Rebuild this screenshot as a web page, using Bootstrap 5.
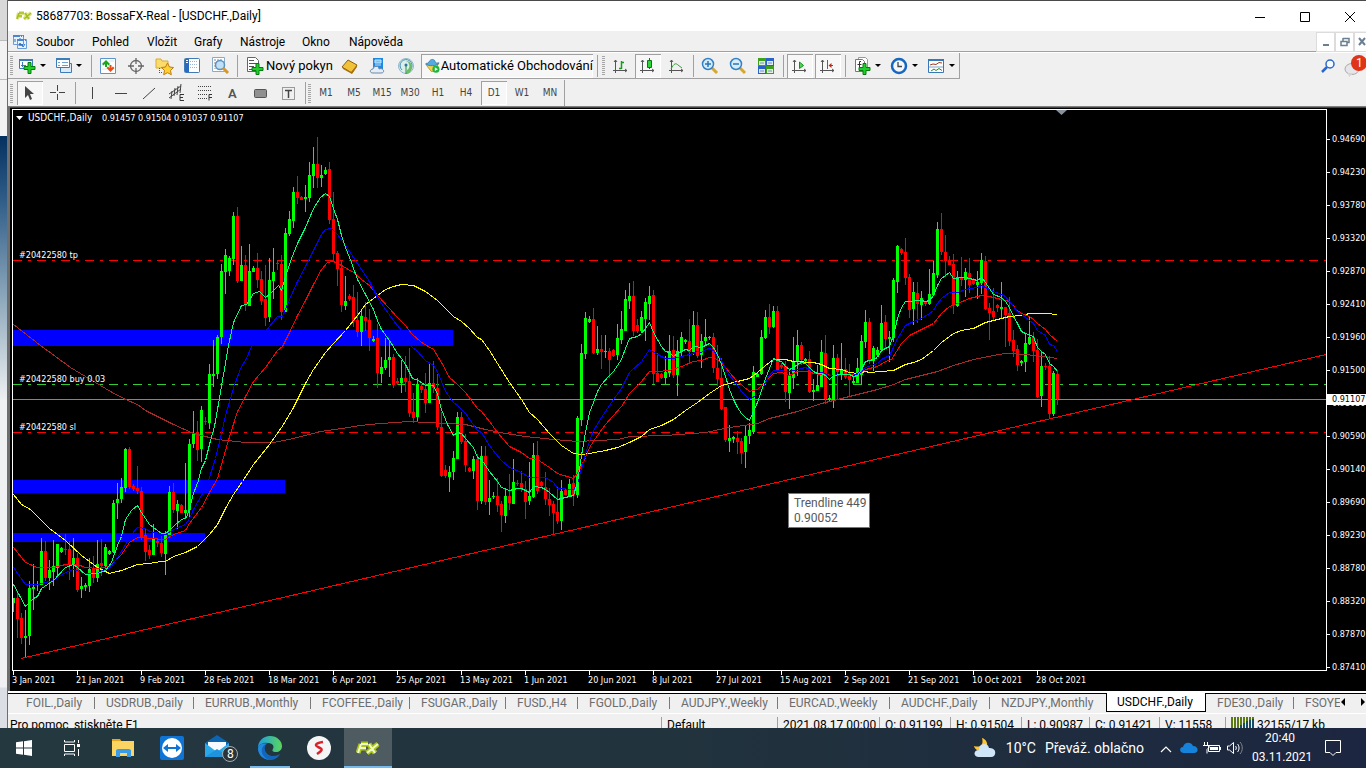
<!DOCTYPE html>
<html lang="cs">
<head>
<meta charset="utf-8">
<meta name="viewport" content="width=device-width, initial-scale=1">
<title>58687703: BossaFX-Real - [USDCHF.,Daily]</title>
<link rel="stylesheet" href="https://cdn.jsdelivr.net/npm/bootstrap@5.3.0/dist/css/bootstrap.min.css">
<style>
  :root { --face: #f0f0f0; --edge: #a0a0a0; }
  body { height: 100vh; font-family: Roboto, sans-serif; font-size: 12px; line-height: 16px; color: #000; background: var(--face); }
  main { min-width: 0; }
  button { border: 0; background: none; padding: 0; color: inherit; }
  .desk { width: 8px; background: linear-gradient(#d9d9d9 0 40px, #bbb 40px 41px, #f2f2f2 41px 79px, #bbb 79px 80px, #f2f2f2 80px 136px, #04305f 136px, #2f5d88 200px, #8fa9bc 300px, #eef0f2 400px, #f0f0f2 687px, #dcdee6 688px); border-right: 1px solid #6d6d6d; }
  .title-row { height: 31px; background: #fff; border-top: 1px solid #4a4a4a; padding-left: 8px; }
  .title-row button { width: 45px; height: 30px; }
  .title-row button:last-child { width: 39px; padding-left: 7px; }
  .menu-row { height: 22px; border-bottom: 1px solid #fff; box-shadow: inset 0 -1px var(--edge); padding-left: 4px; }
  .menu-row a { color: #000; text-decoration: none; }
  .menu-grid { display: grid; grid-template-columns: 56px 55px 47px 46px 62px 47px 74px; }
  .mdi { gap: 2px; }
  .mdi button { width: 17px; height: 18px; background: #fff; outline: 1px solid #dcdcdc; }
  .mdi button:last-child { width: 11px; overflow: hidden; }
  .tools { height: 26px; border-bottom: 1px solid var(--edge); border-right: 1px solid var(--edge); }
  .tools2 { border-bottom: 0; height: 26px; margin-top: 1px; }
  .grip { width: 8px; height: 19px; background: repeating-linear-gradient(#a6a6a6 0 1px, #f0f0f0 1px 2px) 2px 0 / 3px 100% no-repeat; }
  .grip.slim { width: 6px; }
  .tool { width: 28px; height: 24px; display: flex; align-items: center; justify-content: center; flex: none; }
  .drop { width: 36px; height: 24px; display: flex; align-items: center; gap: 3px; padding-left: 1px; flex: none; }
  .drop::after { content: ""; border: 3px solid transparent; border-top-color: #000; border-bottom: 0; }
  .drop.wide { width: 37px; padding-left: 4px; }
  .pressed { background: #f7f7f7; box-shadow: inset 1px 1px #a0a0a0, inset -1px -1px #fff; }
  .tool.pressed { width: 26px; margin: 0 1px; }
  .divide { width: 6px; height: 22px; background: linear-gradient(#a0a0a0, #a0a0a0) 3px 0 / 1px 100% no-repeat; flex: none; }
  .divide.slim { width: 4px; }
  .order { width: 96px; padding-left: 5px; gap: 1px; flex: none; white-space: nowrap; }
  .auto { width: 172px; height: 24px; padding-left: 4px; margin: 0 1px; flex: none; white-space: nowrap; }
  .order span, .auto span { font-size: 13px; }
  .frames { font-family: "DejaVu Sans Condensed", sans-serif; font-size: 10px; color: #444; }
  .chart-frame { border-top: 1px solid #808080; border-left: 2px solid #6e6e6e; background: #000; padding: 2px 0 0 2px; color: #fff; box-shadow: inset 0 1px #444; font-family: "DejaVu Sans Condensed", sans-serif; font-size: 9px; }
  .plot { border: 1px solid #fff; }
  .plot svg text { font-size: 9px; fill: #fff; }
  .plot svg text.symbol { font-size: 10px; }
  .prices { width: 39px; padding-top: 14px; }
  .prices div { height: 33px; line-height: 33px; padding-left: 5px; background: linear-gradient(#fff, #fff) 0 16px / 3px 1px no-repeat; }
  .prices .bid { top: 285px; left: 0; right: 0; height: 11px; line-height: 11px; background: #fff; color: #000; }
  .dates { height: 20px; }
  .dates span { width: 64px; flex: none; line-height: 18px; background: linear-gradient(#fff, #fff) 1px 0 / 1px 4px no-repeat; }
  .tabs { height: 23px; border-top: 2px solid #fff; border-bottom: 1px solid #fff; box-shadow: inset 0 1px #000; color: #6d6d6d; padding-left: 7px; display: grid; grid-template-columns: 80px 99px 117px 99px 96px 72px 92px 108px 112px 100px 116px 100px 88px 1fr 26px; }
  .tabs button { text-align: left; padding-left: 11px; height: 20px; line-height: 18px; white-space: nowrap; overflow: hidden; background: linear-gradient(#7a7a7a, #7a7a7a) 100% 4px / 1px 12px no-repeat; }
  .tabs .current { background: #fff; color: #000; border: 1px solid #000; border-top: 0; height: 19px; padding-left: 10px; }
  .tabs .bare { background: none; }
  .status { height: 14px; overflow: hidden; padding-left: 2px; display: grid; grid-template-columns: 1fr 116px 102px 71px 71px 68px 70px 66px 140px; }
  .status span { height: 22px; border-right: 1px solid #a0a0a0; padding-left: 5px; margin-top: 3px; white-space: nowrap; line-height: 17px; }
  .status span:first-child { padding-left: 0; }
  .status span:last-child { border: 0; }
  .taskbar { height: 40px; background: linear-gradient(90deg, #243840, #21333d 50%, #1c2640); color: #fff; }
  .taskbar .app { width: 48px; height: 40px; display: flex; align-items: center; justify-content: center; margin-right: 1px; }
  .taskbar .app.start { margin-right: 0; }
  .taskbar .app.tasks { margin-right: 3px; }
  .app.running { background: linear-gradient(#76b9ed, #76b9ed) 50% 100% / 40px 2px no-repeat; }
  .app.active { background: linear-gradient(#76b9ed, #76b9ed) 0 100% / 100% 2px no-repeat #4e5c61; }
  .weather { font-size: 14px; gap: 9px; }
  .clock { width: 56px; }
  .tip { left: 775px; top: 383px; width: 82px; height: 35px; background: #fff; border: 1px solid #767676; color: #575757; font-family: Roboto, sans-serif; font-size: 12px; line-height: 15px; padding: 2px 5px; white-space: nowrap; }
</style>
</head>
<body class="d-flex flex-column overflow-hidden">
<div class="d-flex flex-fill overflow-hidden">
<div class="desk flex-shrink-0"></div>
<main class="d-flex flex-column flex-fill overflow-hidden">
  <header class="title-row d-flex align-items-center flex-shrink-0">
    <svg width="16" height="10" viewBox="0 0 16 10"><path d="M3 2h5M2 5h4M3 2 1 8M9 2l4 6M15 2 8 8" fill="none" stroke="#dbe58a" stroke-width="4"/><path d="M3 2h5M2 5h4M3 2 1 8M9 2l4 6M15 2 8 8" fill="none" stroke="#a9bd1c" stroke-width="1.5"/></svg>
    <span class="ms-1 flex-fill">58687703: BossaFX-Real - [USDCHF.,Daily]</span>
    <button aria-label="Minimalizovat"><svg width="10" height="10"><path d="M0 5.5h10" stroke="#000"/></svg></button>
    <button aria-label="Maximalizovat"><svg width="10" height="10"><path d="M.5.5h9v9h-9z" stroke="#000" fill="none"/></svg></button>
    <button aria-label="Zavřít"><svg width="10" height="10"><path d="m0 0 10 10M10 0 0 10" stroke="#000"/></svg></button>
  </header>

  <nav class="menu-row d-flex align-items-center flex-shrink-0">
    <svg width="16" height="16" viewBox="0 0 16 16"><path d="M1.500 1.500h10v9h-10zM5.500 5.500h9v9h-9z" fill="#e8f2fc" stroke="#6a9cd8"/><path d="M1 2h11M5 6h10" stroke="#4a86cf" stroke-width="2" stroke-dasharray="7 1 1 1"/><path d="M3 8V5M8 5v-1M7 12l1-3 1 3 1-2 1 3 2-3" fill="none" stroke="#2d6fc0"/></svg>
    <div class="menu-grid flex-fill">
      <a href="#" class="ps-2">Soubor</a><a href="#" class="ps-2">Pohled</a><a href="#" class="ps-2">Vložit</a><a href="#" class="ps-2">Grafy</a><a href="#" class="ps-2">Nástroje</a><a href="#" class="ps-2">Okno</a><a href="#" class="ps-2">Nápověda</a>
    </div>
    <div class="mdi d-flex">
      <button aria-label="Minimalizovat graf"><svg width="10" height="10"><path d="M2 8h6" stroke="#6b7f92" stroke-width="2"/></svg></button>
      <button aria-label="Obnovit graf"><svg width="10" height="10"><path d="M3 1.500h6v4H7M1 4.500h6v4H1zM3 1v3" stroke="#6b7f92" fill="none" stroke-width="1.500"/></svg></button>
      <button aria-label="Zavřít graf"><svg width="10" height="10"><path d="m3 1 6 7M9 1 3 8" stroke="#6b7f92" stroke-width="2"/></svg></button>
    </div>
  </nav>

  <div class="d-flex flex-shrink-0">
  <div class="tools d-flex align-items-center">
    <div class="grip"></div>
    <button class="drop" aria-label="Nový graf"><svg width="20" height="20" viewBox="0 0 20 20"><path d="M2.500 3.500h13v9h-13z" fill="#fff" stroke="#3d7cb8"/><path d="M2 4h14" stroke="#3d7cb8" stroke-width="2"/><path d="M5.500 6v5M4 9.500h5M12 6v2" stroke="#3d7cb8"/><path d="M11 6.500h3v4h4v3h-4v4h-3v-4H7v-3h4z" fill="#1fd02a" stroke="#087810"/></svg></button>
    <button class="drop" aria-label="Profily"><svg width="20" height="20" viewBox="0 0 20 20"><path d="M7.500 7.500h11v9h-11z" fill="#dcebf8" stroke="#3d7cb8"/><path d="M3.500 2.500h13v9h-13z" fill="#fff" stroke="#3d7cb8"/><path d="M5 6.500h2M9 6.500h6M5 9.500h2M9 9.500h6" stroke="#6ea2d0"/><path d="M3 3h14" stroke="#3d7cb8" stroke-width="2"/></svg></button>
    <div class="divide"></div>
    <button class="tool" aria-label="Tržní přehled"><svg width="18" height="18" viewBox="0 0 18 18"><path d="M1.500 1.500h15v15h-15z" fill="#fdfefe" stroke="#5b95cc"/><path d="M3 6h3M10 4h5M3 12h5" stroke="#dce4ee"/><path d="m7 3 4 4-1.500 1.500L8 7v3H6V7L4.500 8.500 3 7z" fill="#18a81c"/><path d="m11.500 15-4-4L9 9.500l1.500 1.500V8h2v3L14 9.500l1.500 1.500z" fill="#ea4b16"/></svg></button>
    <button class="tool" aria-label="Okno údajů"><svg width="18" height="18" viewBox="0 0 18 18"><circle cx="9" cy="9" r="5.500" fill="none" stroke="#666" stroke-width="1.300"/><path d="M9 1v6M9 11v6M1 9h6M11 9h6" stroke="#666" stroke-width="1.300"/></svg></button>
    <button class="tool" aria-label="Navigátor"><svg width="20" height="20" viewBox="0 0 20 20"><path d="M2 3h5l1 2h6v7H2z" fill="#fbdc6a" stroke="#d9ab33"/><path d="M5.500 12v6M5 16.500h4" stroke="#555" stroke-dasharray="1 1" fill="none"/><path d="m13.500 7 2 4 4 .5-3 3 .8 4.200-3.800-2-3.800 2 .8-4.200-3-3 4-.5z" fill="#ffcf33" stroke="#ba7d13"/></svg></button>
    <button class="tool" aria-label="Terminál"><svg width="18" height="18" viewBox="0 0 18 18"><rect x="1.500" y="1.500" width="15" height="14" rx="1" fill="#fff" stroke="#4179b4"/><path d="M4 2v13" stroke="#2c69c0" stroke-width="4"/><path d="M3 3.500h2M3 5.500h2" stroke="#fff"/><path d="M7 4.500h8M7 7.500h8M7 10.500h8" stroke="#9bb5d5" stroke-dasharray="1 1"/></svg></button>
    <button class="tool" aria-label="Tester strategií"><svg width="20" height="20" viewBox="0 0 20 20"><path d="M2.500 1.500h12v14h-12z" fill="#fff" stroke="#8ba9c8"/><path d="M5 3v10M8 3v10M11 3v10" stroke="#888" stroke-dasharray="2 1"/><circle cx="10" cy="9" r="4.500" fill="#bfe0f6" stroke="#5c92bd" stroke-width="1.500"/><path d="m13 12 5 5" stroke="#d4992a" stroke-width="3"/></svg></button>
    <div class="divide"></div>
    <button class="order d-flex align-items-center"><svg width="20" height="20" viewBox="0 0 20 20"><path d="M2.500 1.500h8l3 3v11h-11z" fill="#fff" stroke="#666"/><path d="M4 4.500h5M4 7.500h8M4 10.500h5M4 13.500h4" stroke="#555"/><path d="M11 7.500h3v4h4v3h-4v4h-3v-4H7v-3h4z" fill="#1fd02a" stroke="#087810"/></svg><span>Nový pokyn</span></button>
    <button class="tool" aria-label="MetaEditor"><svg width="18" height="18" viewBox="0 0 18 18"><path d="M1 10 7 3l9 5-5 8z" fill="#f2c13a" stroke="#8a5e0c"/><path d="m1 10 9 5 1 2-9-5zM10 15l6-7v2l-5 7z" fill="#a8710f"/></svg></button>
    <button class="tool" aria-label="VPS"><svg width="18" height="18" viewBox="0 0 18 18"><path d="M4 1h10v11H4z" fill="#1e87e0"/><path d="M6 3h6v3H6zM6 8h6" stroke="#c4e7ff" fill="#6cc5ff"/><path d="M4 16c-4 0-3-4 0-4 0-3 6-4 6 0 4-2 7 4 2 4z" fill="#e3edf7" stroke="#6b87a8"/></svg></button>
    <button class="tool" aria-label="Signály"><svg width="18" height="18" viewBox="0 0 18 18"><circle cx="9" cy="9" r="7.500" fill="#dcefe6" stroke="#8fb7ce"/><path d="M5 13a6 6 0 1 1 9-1" stroke="#4a90b8" fill="none"/><path d="M9 4a5 5 0 0 1 1 9l-1 4c8-1 8-13 0-13z" fill="#69bd66"/><circle cx="9" cy="8" r="1.500" fill="#2873a8"/><path d="M9 9v8" stroke="#258c38"/></svg></button>
    <button class="auto pressed d-flex align-items-center"><svg width="20" height="20" viewBox="0 0 20 20"><path d="M1 8h16l-7 9H8z" fill="#f4cf4e" stroke="#b88d1d"/><path d="M1 7c2-1 3 0 4-2 2-5 8-4 8 0 1 2 3 1 5 1-1 4-15 5-17 1z" fill="#55abdf" stroke="#2a78ae"/><circle cx="14" cy="14" r="4.500" fill="#1db53a"/><path d="m12.500 11.500 4 2.500-4 2.500z" fill="#fff"/></svg><span>Automatické Obchodování</span></button>
    <div class="divide"></div>
    <div class="grip slim"></div>
    <button class="tool" aria-label="Sloupcový graf"><svg width="18" height="18" viewBox="0 0 18 18"><path d="M4.500 3v13M2 13.500h14M3 5l1.500-2L6 5M14 12l2 1.500-2 1.500" fill="none" stroke="#555"/><path d="M10.500 4v8M8 11.500h2M11 5.500h2" stroke="#159c1a" stroke-width="1.500"/></svg></button>
    <button class="tool pressed" aria-label="Svíčkový graf"><svg width="18" height="18" viewBox="0 0 18 18"><path d="M3.500 3v13M1 13.500h14M2 5l1.500-2L5 5M13 12l2 1.500-2 1.500" fill="none" stroke="#555"/><path d="M10.500 1v11" stroke="#087810"/><path d="M8.500 3.500h4v7h-4z" fill="#2ed43a" stroke="#087810"/></svg></button>
    <button class="tool" aria-label="Čárový graf"><svg width="18" height="18" viewBox="0 0 18 18"><path d="M4.500 3v13M2 13.500h14M3 5l1.500-2L6 5M14 12l2 1.500-2 1.500" fill="none" stroke="#555"/><path d="M4 12c3-6 5-6 7-4l4 3" fill="none" stroke="#35a03a"/></svg></button>
    <div class="divide"></div>
    <button class="tool" aria-label="Přiblížit"><svg width="18" height="18" viewBox="0 0 18 18"><path d="m11 11 5 5" stroke="#d9a62c" stroke-width="3"/><circle cx="7" cy="7" r="5.500" fill="#d5ecfb" stroke="#3480c4" stroke-width="1.500"/><path d="M4 7h6M7 4v6" stroke="#2d74b8" stroke-width="1.500"/></svg></button>
    <button class="tool" aria-label="Oddálit"><svg width="18" height="18" viewBox="0 0 18 18"><path d="m11 11 5 5" stroke="#d9a62c" stroke-width="3"/><circle cx="7" cy="7" r="5.500" fill="#d5ecfb" stroke="#3480c4" stroke-width="1.500"/><path d="M4 7h6" stroke="#2d74b8" stroke-width="1.500"/></svg></button>
    <button class="tool" aria-label="Uspořádat okna"><svg width="18" height="18" viewBox="0 0 18 18"><path d="M1 1h8v8H1zM9 9h8v8H9z" fill="#3fa01c"/><path d="M9 1h8v8H9zM1 9h8v8H1z" fill="#2a62cc"/><path d="M2 4h6v4H2zM10 4h6v4h-6zM2 12h6v4H2zM10 12h6v4h-6z" fill="#fff" opacity=".85"/><path d="M3 6h4M11 6h4M3 14h4M11 14h4" stroke="#6d95b8"/></svg></button>
    <div class="divide"></div>
    <button class="tool pressed" aria-label="Automatický posun"><svg width="18" height="18" viewBox="0 0 18 18"><path d="M3.500 3v13M1 13.500h14M2 5l1.500-2L5 5M13 12l2 1.500-2 1.500" fill="none" stroke="#555"/><path d="m8.500 5 4 3.500-4 3z" fill="#4fd857" stroke="#129018"/></svg></button>
    <button class="tool pressed" aria-label="Odsazení grafu"><svg width="18" height="18" viewBox="0 0 18 18"><path d="M3.500 3v13M1 13.500h14M2 5l1.500-2L5 5M13 12l2 1.500-2 1.500" fill="none" stroke="#555"/><path d="M8.500 3v9" stroke="#2d6eb0"/><path d="M14 8.500h-4" stroke="#b03020"/><path d="M12.500 6v5L9.500 8.500z" fill="#b03020"/></svg></button>
    <div class="divide"></div>
    <button class="drop wide" aria-label="Indikátory"><svg width="20" height="20" viewBox="0 0 20 20"><path d="M6.500 1.500h7l2 2v10h-9z" fill="#fff" stroke="#999"/><path d="M3.500 3.500h7l2 2v10h-9z" fill="#fff" stroke="#777"/><path d="M9 5.500H7.500V13M5.500 8.500h4" stroke="#333" fill="none"/><path d="M11 7.500h3v4h4v3h-4v4h-3v-4H7v-3h4z" fill="#1fd02a" stroke="#087810"/></svg></button>
    <button class="drop wide" aria-label="Periody"><svg width="20" height="20" viewBox="0 0 20 20"><circle cx="10" cy="10" r="7" fill="#f4f8fb" stroke="#1766c0" stroke-width="2.500"/><path d="M9 6v4.500h4" stroke="#444" fill="none" stroke-width="1.300"/></svg></button>
    <button class="drop wide" aria-label="Šablony"><svg width="20" height="20" viewBox="0 0 20 20"><path d="M2.500 3.500h15v13h-15z" fill="#fff" stroke="#3878b8"/><path d="M2 4h16" stroke="#3878b8" stroke-width="2"/><path d="M3 11h14" stroke="#7aa5d2"/><path d="m4 9 3-1 3 .5 3-2 3 .5" stroke="#a33b22" fill="none"/><path d="m5 15 3-2 2 1.500 3-2 3 2" stroke="#22902c" fill="none"/></svg></button>
  </div>
  <div class="flex-fill d-flex justify-content-end align-items-center">
    <button class="me-2" aria-label="Hledat"><svg width="16" height="16" viewBox="0 0 16 16"><circle cx="10" cy="6" r="4" fill="#f5faff" stroke="#2c66cc" stroke-width="1.500"/><path d="m7 9-5 5" stroke="#2c66cc" stroke-width="2.500"/></svg></button>
    <button aria-label="Zprávy, 1 nová"><svg width="22" height="26" viewBox="0 0 22 26"><ellipse cx="8" cy="16" rx="7" ry="5.500" fill="#e5e5ea" stroke="#aaa"/><path d="m4 20 1 4 5-4" fill="#d5d5d8"/><circle cx="15" cy="10" r="8" fill="#df3417"/><text x="12" y="14" font-size="12" fill="#fff">1</text></svg></button>
  </div>
  </div>

  <div class="d-flex flex-shrink-0">
  <div class="tools tools2 d-flex align-items-center">
    <div class="grip"></div>
    <button class="tool pressed" aria-label="Kurzor"><svg width="18" height="18" viewBox="0 0 18 18"><path d="M4 2v12l3-3 2 5 2-1-2-5h4z" fill="#444"/></svg></button>
    <button class="tool" aria-label="Zaměřovač"><svg width="18" height="18" viewBox="0 0 18 18"><path d="M8.500 1v6M8.500 10v6M1 8.500h6M10 8.500h6" stroke="#444"/></svg></button>
    <div class="divide"></div>
    <button class="tool" aria-label="Svislá čára"><svg width="18" height="18"><path d="M9.500 3v12" stroke="#444"/></svg></button>
    <button class="tool" aria-label="Vodorovná čára"><svg width="18" height="18"><path d="M4 9.500h12" stroke="#444"/></svg></button>
    <button class="tool" aria-label="Trendová čára"><svg width="18" height="18"><path d="M4 15 16 4" stroke="#444"/></svg></button>
    <button class="tool" aria-label="Kanál"><svg width="18" height="18" viewBox="0 0 18 18"><path d="m2 14 12-9M5 7l-1 8M8 4l-1 8M11 2l-1 9M14 0l-1 9M2 10 14 2" stroke="#444" fill="none"/><path d="M17 10.500h-4v6h4M13 13.500h3" fill="none" stroke="#333"/></svg></button>
    <button class="tool" aria-label="Fibonacci"><svg width="18" height="18" viewBox="0 0 18 18"><path d="M3 2.500h14M3 6.500h14M3 10.500h9M3 14.500h9" stroke="#444" stroke-dasharray="1 1"/><path d="M17 10.500h-3v6M14 13.500h3" fill="none" stroke="#333"/></svg></button>
    <button class="tool" aria-label="Text"><svg width="18" height="18" viewBox="0 0 18 18"><text x="5" y="14" font-size="13" font-weight="600" fill="#555">A</text></svg></button>
    <button class="tool" aria-label="Obdélník"><svg width="18" height="18"><rect x="3.500" y="5.500" width="12" height="8" rx="1" fill="#909090" stroke="#555"/></svg></button>
    <button class="tool" aria-label="Textový štítek"><svg width="18" height="18" viewBox="0 0 18 18"><path d="M3.500 3.500h12v12h-12z" fill="none" stroke="#444" stroke-dasharray="1 1"/><path d="M6 6.500h7M9.500 6v8" stroke="#444" stroke-width="1.500"/></svg></button>
    <div class="divide slim"></div>
    <div class="grip slim"></div>
    <div class="frames d-flex align-items-center">
      <button class="tool">M1</button><button class="tool">M5</button><button class="tool">M15</button><button class="tool">M30</button><button class="tool">H1</button><button class="tool">H4</button><button class="tool pressed">D1</button><button class="tool">W1</button><button class="tool">MN</button>
    </div>
  </div>
  </div>

  <section class="chart-frame flex-fill d-flex flex-column overflow-hidden">
    <div class="d-flex flex-fill overflow-hidden">
      <div class="plot flex-fill position-relative overflow-hidden">
        <svg width="100%" height="100%" class="d-block" aria-label="Graf USDCHF">
          <g transform="translate(-13 -110)">
            <path d="M13 330h440v16H13zM13 480h272v13H13zM13 533h192v9H13z" fill="#00f"/>
            <g shape-rendering="crispEdges" fill="none">
              <path d="M13 260.500h1400M13 432.500h1400" stroke="#f00" stroke-dasharray="9 6 3 6"/>
              <path d="M13 384.500h1400" stroke="#32cd32" stroke-dasharray="9 6 3 6"/>
              <path d="M13 399.500h1400" stroke="#778899"/>
              <path id="up" fill="#0f0"/><path id="down" fill="#f00"/>
              <g id="averages" transform="translate(.5 .5)"></g>
              <path d="M21 658.500 1326 354.500" stroke="#f00"/>
            </g>
            <path d="M16 116h7l-3.500 4z" fill="#fff"/><path d="M1056 110h11l-5.500 5z" fill="#8593a1"/>
            <text class="symbol" x="28" y="121">USDCHF.,Daily</text><text x="102" y="121">0.91457 0.91504 0.91037 0.91107</text>
            <text x="19" y="258">#20422580 tp</text><text x="19" y="382">#20422580 buy 0.03</text><text x="19" y="430">#20422580 sl</text>
          </g>
        </svg>
        <div class="tip position-absolute">Trendline 449<br>0.90052</div>
      </div>
      <div class="prices position-relative flex-shrink-0">
        <div>0.94690</div><div>0.94230</div><div>0.93780</div><div>0.93320</div><div>0.92870</div><div>0.92410</div><div>0.91960</div><div>0.91500</div><div>0.91050</div><div>0.90590</div><div>0.90140</div><div>0.89690</div><div>0.89230</div><div>0.88780</div><div>0.88320</div><div>0.87870</div><div>0.87410</div>
        <div class="bid position-absolute">0.91107</div>
      </div>
    </div>
    <div class="dates d-flex flex-shrink-0"><span>3 Jan 2021</span><span>21 Jan 2021</span><span>9 Feb 2021</span><span>28 Feb 2021</span><span>18 Mar 2021</span><span>6 Apr 2021</span><span>25 Apr 2021</span><span>13 May 2021</span><span>1 Jun 2021</span><span>20 Jun 2021</span><span>8 Jul 2021</span><span>27 Jul 2021</span><span>15 Aug 2021</span><span>2 Sep 2021</span><span>21 Sep 2021</span><span>10 Oct 2021</span><span>28 Oct 2021</span></div>
  </section>

  <div class="tabs flex-shrink-0">
    <button>FOIL.,Daily</button><button>USDRUB.,Daily</button><button>EURRUB.,Monthly</button><button>FCOFFEE.,Daily</button><button>FSUGAR.,Daily</button><button>FUSD.,H4</button><button>FGOLD.,Daily</button><button>AUDJPY.,Weekly</button><button>EURCAD.,Weekly</button><button>AUDCHF.,Daily</button><button class="bare">NZDJPY.,Monthly</button><button class="current">USDCHF.,Daily</button><button>FDE30.,Daily</button><button class="bare">FSOYE</button>
    <svg width="26" height="18" aria-hidden="true"><path d="M5 5v8L1 9zM21 5v8l4-4z" fill="#000"/></svg>
  </div>
  <footer class="status flex-shrink-0">
    <span>Pro pomoc, stiskněte F1</span><span>Default</span><span>2021.08.17 00:00</span><span>O: 0.91199</span><span>H: 0.91504</span><span>L: 0.90987</span><span>C: 0.91421</span><span>V: 11558</span>
    <span><svg width="23" height="12" class="align-top"><path d="M1 0v12M4 0v12M7 0v12M10 0v8M13 0v6M16 0v4M19 0v3M22 0v2" stroke="#5c7a12" stroke-width="2"/><path d="M10 8v4M13 6v6M16 4v8M19 3v9M22 2v10" stroke="#174a66" stroke-width="2"/></svg> 32155/17 kb</span>
  </footer>
</main>
</div>

<div class="taskbar d-flex align-items-center flex-shrink-0">
  <button class="app start" aria-label="Start"><svg width="16" height="16" viewBox="0 0 16 16"><path d="M0 2.300 7 1.300v6.200H0zM8 1.200 16 0v7.500H8zM0 8.500h7v6.200l-7-1zM8 8.500h8V16l-8-1.200z" fill="#fff"/></svg></button>
  <button class="app tasks" aria-label="Zobrazení úloh"><svg width="16" height="16" viewBox="0 0 16 16"><path d="M.500 4.500h10v7H.500zM.500 0v2h10V0M.500 16v-2h10v2M14.500 0v3M14.500 9v7" fill="none" stroke="#fff"/><path d="M13 4h3v3h-3z" fill="#fff"/></svg></button>
  <button class="app" aria-label="Průzkumník"><svg width="24" height="20" viewBox="0 0 24 20"><path d="M1 1h8l2 3H1z" fill="#e8a317"/><path d="M1 3h22v15H1z" fill="#fcd462"/><path d="M5 19v-7l2-1h11l2 1v7h-4v-4H9v4z" fill="#3b9be5"/></svg></button>
  <button class="app" aria-label="TeamViewer"><svg width="24" height="24" viewBox="0 0 24 24"><rect width="24" height="24" rx="2" fill="#0e74d6"/><circle cx="12" cy="12" r="10" fill="#fff"/><path d="m3 12 5-4v3h8V8l5 4-5 4v-3H8v3z" fill="#0e74d6"/></svg></button>
  <button class="app" aria-label="Pošta, 8"><svg width="34" height="28" viewBox="0 0 34 28"><path d="m1 9 12-8 12 8v12H1z" fill="#0b65b3"/><path d="M4 8h18v10H4z" fill="#f7fbff"/><path d="m1 9 12 9 12-9v14H1z" fill="#29a8ea"/><path d="m1 23 12-8 12 8z" fill="#1e94dc"/><circle cx="26" cy="20" r="7.500" fill="#2b343a" stroke="#a5adb0"/><text x="23" y="24" font-size="12" fill="#fff">8</text></svg></button>
  <button class="app running" aria-label="Edge"><svg width="24" height="24" viewBox="0 0 24 24"><defs><linearGradient id="eg"><stop stop-color="#1b9de2"/><stop offset="1" stop-color="#5bd65a"/></linearGradient></defs><path d="M0 12C0 5 5 0 12 0s12 5 12 10c0 4-3 6-6 6-4 0-4-2-3-3 2-4-2-6-5-6-5 0-9 2-10 5z" fill="url(#eg)"/><path d="M0 12c1-5 7-6 10-5-6 3-3 13 5 13 3 0 5-1 7-2-2 4-6 6-10 6C5 24 0 19 0 12z" fill="#1267bd"/><path d="M8 8c-7 3-5 14 4 16-8-1-12-6-12-12 1-4 5-5 8-4z" fill="#2389dc"/></svg></button>
  <button class="app" aria-label="Seznam"><svg width="24" height="24" viewBox="0 0 24 24"><circle cx="12" cy="12" r="12" fill="#f4f5f6"/><path d="M16 6c-7 1-9 3-5 5 5 2 5 3-1 7" fill="none" stroke="#d8232a" stroke-width="2.500"/></svg></button>
  <button class="app active" aria-label="MetaTrader"><svg width="24" height="14" viewBox="0 0 24 14"><path d="M5 3h7M4 7h6M5 3 2 12M13 3l6 9M22 3 11 12" fill="none" stroke="#a8c814" stroke-width="5"/><path d="M5 3h7M4 7h6M5 3 2 12M13 3l6 9M22 3 11 12" fill="none" stroke="#f3f8cc" stroke-width="2"/></svg></button>
  <div class="flex-fill"></div>
  <div class="weather d-flex align-items-center">
    <svg width="24" height="22" viewBox="0 0 24 22"><path d="M9 1c2 7-2 10-8 8 1 5 8 7 12 2 3-4 0-9-4-10z" fill="#ffc72e"/><path d="M6 20c-6 0-6-7 0-7 0-7 9-8 10-2 8-1 8 9 2 9z" fill="#cfe5f8"/></svg>
    <span>10°C</span><span>Převáž. oblačno</span>
  </div>
  <div class="d-flex align-items-center ms-3">
    <button aria-label="Skryté ikony"><svg width="12" height="8"><path d="m1 7 5-5 5 5" fill="none" stroke="#fff" stroke-width="1.200"/></svg></button>
    <svg class="ms-2" width="18" height="12" viewBox="0 0 18 12"><path d="M4 11c-5 0-5-6-1-6 1-5 8-6 10-1 6 0 6 7 1 7z" fill="#1582dc"/></svg>
    <svg class="ms-1" width="20" height="14" viewBox="0 0 20 14"><path d="M6.500 4.500h11v6h-11z" fill="none" stroke="#fff"/><path d="M8 6h8v3H8zM18 6h1v3h-1z" fill="#fff"/><path d="M2.500 1v3M5.500 1v3M1 4.500h6v2l-2 2v4" fill="none" stroke="#fff"/></svg>
    <svg class="ms-1" width="18" height="14" viewBox="0 0 18 14"><path d="M1.500 5v4h2l4 3.500v-11L3.500 5z" fill="none" stroke="#fff"/><path d="M9.500 5c1 1 1 3 0 4M11.500 3c2 2 2 6 0 8" fill="none" stroke="#fff"/><path d="M14 1c3 3 3 9 0 12" fill="none" stroke="#7d8792"/></svg>
  </div>
  <div class="clock text-center ms-2 lh-sm"><div>20:40</div><div class="mt-1">03.11.2021</div></div>
  <button class="ms-3 me-3 pe-2" aria-label="Oznámení"><svg width="18" height="18" viewBox="0 0 18 18"><path d="M1.500 1.500h15v12H12l-3 3-3-3H1.500z" fill="none" stroke="#fff"/></svg></button>
</div>

<script src="https://cdn.jsdelivr.net/npm/bootstrap@5.3.0/dist/js/bootstrap.bundle.min.js"></script>
<script>
// One candle per entry: direction (G up, R down), then high, body top, body bottom and low.
const candles = `
G598,598,603,612 R592,598,619,638 R613,618,638,644 G610,636,638,657 G581,588,636,645 G564,587,589,610 G581,584,585,591 G538,551,585,585 R541,551,578,581 G560,570,578,590
G540,566,572,586 G544,544,568,575 G547,548,552,553 R534,549,550,555 R541,549,565,580 G538,558,564,577 R553,558,590,592 G577,586,589,598 G583,585,587,591 G558,569,586,592
R556,568,578,583 G540,564,578,582 R539,563,566,576 G544,547,566,571 G550,551,554,555 G500,503,552,553 G483,499,503,519 G478,487,499,503 G448,449,488,492 R447,449,487,489
R484,486,489,491 R466,488,491,494 R487,491,537,540 R529,535,552,561 R545,550,555,559 G524,538,555,555 R538,541,543,547 R536,543,553,557 G531,535,554,575 G486,492,535,535
R483,492,510,513 G500,504,511,529 R504,505,513,513 G463,510,513,519 G439,444,510,519 G411,433,444,448 R421,432,450,461 G406,410,449,462 R417,421,422,425 G364,374,423,429
G340,374,376,387 G335,337,374,379 G264,271,337,344 G249,255,272,294 G256,258,271,276 G212,216,259,265 R207,216,281,283 G246,265,281,281 R255,265,305,311 G244,271,306,306
G266,268,272,272 R253,268,280,288 R271,279,301,305 R265,299,318,326 G258,280,317,322 G248,272,281,299 R260,263,264,270 R255,264,312,320 G228,233,312,312 G211,219,234,236
G187,192,221,228 R176,192,198,204 R196,197,200,200 G185,197,199,212 G162,175,198,202 G147,164,176,188 R137,164,178,188 G165,175,178,187 G167,170,174,175 R162,169,220,224
R192,219,254,262 R251,253,269,286 R260,268,305,312 G276,301,306,310 R294,296,299,301 R285,297,321,327 R292,320,332,337 G310,316,332,346 R302,317,321,331 R309,320,338,351
G336,339,341,342 R324,338,373,388 G357,367,374,383 G338,360,368,370 G341,357,360,377 R354,357,385,388 R378,381,383,385 G360,378,383,393 R356,378,382,392 R348,381,413,417
R393,412,418,423 G378,384,417,422 R384,386,390,393 R373,389,403,413 G364,383,403,403 R361,383,388,393 R374,388,427,430 R412,427,476,477 R465,470,476,478 G466,472,477,492
G451,458,472,480 G412,417,459,459 R412,417,442,444 R434,441,465,472 R467,468,471,472 G456,459,471,479 R454,459,501,510 G446,456,501,504 R446,456,502,505 G480,498,502,515
G492,496,497,499 R478,496,505,512 R501,504,515,532 G489,496,516,523 R474,496,503,510 G459,482,504,504 R480,483,484,486 R471,483,489,492 R481,489,502,519 G462,496,501,505
G443,455,497,498 R441,455,491,494 R481,482,486,488 R472,487,499,505 R488,499,505,516 R501,504,513,534 R487,512,521,524 G480,491,521,530 R488,490,495,495 G479,484,496,497
R475,483,495,506 G416,418,495,498 G344,353,420,426 G312,318,354,359 G316,319,322,323 R308,319,353,354 G326,349,353,355 R335,349,352,369 G335,351,352,358 R348,351,360,378
R349,350,356,357 G324,338,355,360 G311,329,340,344 G290,299,331,331 G283,296,301,309 R281,296,331,336 R319,325,331,333 G311,317,331,333 G298,302,319,341 G286,296,304,320
R290,295,374,384 R353,373,382,382 R373,374,378,379 G356,372,378,384 G335,351,373,377 R336,350,375,378 G340,351,375,396 G332,337,351,356 G339,340,342,344 R319,341,352,363
G311,325,352,355 R312,325,356,358 G334,341,355,368 G319,337,341,345 G336,337,338,340 R333,337,368,373 R345,368,379,386 R358,378,409,410 R407,407,440,442 G425,438,441,452
G436,437,439,443 R431,438,442,454 R438,441,453,464 G425,436,452,468 G423,430,436,444 G366,372,432,434 G372,374,377,377 G330,337,374,375 G310,317,338,339 R304,317,327,334
G306,311,327,328 R306,311,370,370 R363,365,367,369 R361,366,392,402 G370,376,393,409 G337,361,378,389 G330,345,362,376 R342,345,360,365 G358,359,361,362 R351,359,392,393
G379,390,392,401 G365,385,391,391 G340,352,387,387 R335,353,399,404 G395,398,400,402 G345,358,401,408 R354,358,372,399 G343,369,374,380 R358,369,377,379 R364,375,380,397
G377,381,383,385 G358,368,383,383 G335,341,375,385 G310,322,342,348 R318,322,361,364 G346,348,361,371 G347,350,355,357 G305,323,350,352 R315,322,339,348 G331,337,339,362
G278,280,338,342 G245,246,282,293 R248,249,253,255 R238,252,278,285 R274,277,310,318 G282,292,309,325 R282,293,304,323 G291,298,305,320 R301,302,304,306 G269,294,304,305
G261,273,295,296 G222,229,275,278 R213,229,252,255 R235,252,261,277 R256,260,265,265 R254,264,305,314 G271,277,306,307 R257,277,280,286 G268,272,280,297 R258,273,285,293
R278,279,284,285 G271,282,285,299 G253,260,283,294 R256,261,309,310 R303,308,313,340 R288,311,317,320 R304,305,308,312 G282,307,309,318 R307,307,315,347 R297,313,341,346
R330,340,351,357 R345,349,365,371 G360,361,363,366 G333,343,362,372 G317,337,344,345 R332,337,351,362 R339,350,397,398 G351,366,396,407 R363,366,367,370 R356,366,414,418
G371,373,414,416 R370,374,399,405`.trim().split(/\s+/);

const paths = { G: '', R: '' };
candles.forEach((entry, i) => {
  const [high, top, bottom, low] = entry.slice(1).split(',').map(Number);
  const x = 13 + 4 * i;
  paths[entry[0]] += `M${x} ${high}h1V${low}h-1zM${x - 1} ${top}h3V${bottom}h-3z`;
});
document.getElementById('up').setAttribute('d', paths.G);
document.getElementById('down').setAttribute('d', paths.R);

// Moving averages, slowest first.
const averages = {
  '#a52a2a': '13,324 40,345 70,367 110,391 125,399 137,404 145,410 157,416 173,424 193,433 205,436 217,439 245,442 273,442 293,438 320,431 341,428 360,425 380,423 409,421 425,422 465,424 485,429 505,433 525,436 553,439 577,441 597,440 617,439 630,436 665,435 705,432 729,427 757,423 769,418 785,414 797,411 821,403 829,401 849,396 877,389 893,384 905,379 937,371 953,365 973,359 993,355 1005,353 1025,354 1041,356 1057,358',
  '#ffff00': '13,494 21,504 30,509 49,528 65,540 81,555 97,567 109,573 121,570 137,564 149,563 161,561 165,561 173,556 185,552 197,546 209,534 217,524 225,508 233,494 242,481 253,464 269,444 281,427 292,409 305,383 313,369 325,352 333,343 345,330 357,315 365,304 377,295 385,289 393,286 401,284 413,285 425,291 437,300 453,316 461,321 469,328 477,337 481,339 489,350 497,363 509,382 521,399 529,412 537,419 549,433 561,445 573,453 581,454 589,453 605,450 617,447 629,442 641,436 649,429 661,425 673,419 685,410 697,402 709,393 721,385 733,382 749,378 757,372 765,365 773,359 785,359 793,361 813,362 821,364 829,368 841,369 849,372 857,373 865,371 869,372 893,370 905,364 913,362 921,359 933,350 941,342 953,333 961,330 973,328 985,322 997,319 1009,316 1021,315 1029,313 1045,313 1057,314',
  '#ff0000': '13,547 25,562 37,567 53,567 65,564 77,564 85,567 97,568 109,566 121,554 129,542 137,537 149,538 165,539 173,534 185,530 189,523 201,507 209,492 217,478 221,464 225,450 230,433 237,411 245,396 253,381 265,367 277,350 282,346 289,332 297,315 305,300 313,284 321,269 327,262 333,261 341,265 353,272 361,279 369,285 377,295 389,308 397,317 405,325 411,333 421,342 433,349 441,362 449,377 457,384 465,392 477,408 481,411 489,421 497,432 509,446 521,452 529,458 537,459 549,467 557,473 573,478 577,473 585,457 589,447 597,435 605,424 613,415 621,406 629,393 641,381 649,371 657,371 669,370 681,366 693,361 701,360 709,357 713,357 721,362 729,372 737,381 749,391 757,389 765,381 773,373 781,372 789,375 797,371 809,371 813,373 821,374 825,373 829,375 849,374 857,374 865,369 877,366 885,361 891,359 901,343 909,335 921,329 933,323 941,313 949,306 957,303 969,298 981,295 989,296 997,298 1009,301 1017,310 1021,313 1029,316 1033,319 1037,323 1045,329 1049,334 1057,341',
  '#0000ff': '13,567 25,584 37,584 53,580 65,572 73,569 85,573 97,573 105,569 111,566 121,551 131,534 137,527 145,528 149,531 165,534 173,529 185,524 189,518 193,509 201,495 208,480 215,458 221,433 225,415 230,398 234,384 241,366 246,358 251,346 265,331 277,316 282,316 289,299 297,281 305,266 313,250 321,234 325,229 331,228 337,234 345,245 353,257 361,269 369,281 377,297 385,309 393,320 401,330 411,346 417,351 425,360 433,365 437,371 445,391 453,402 457,405 465,413 477,430 481,432 489,445 495,453 501,460 509,467 521,472 529,477 545,477 553,482 557,488 573,489 577,483 581,468 585,453 589,441 593,430 601,417 609,405 613,399 621,388 629,372 641,361 649,349 657,354 665,358 673,358 681,356 689,354 697,351 701,352 705,349 709,348 713,350 721,360 729,375 737,385 741,391 749,399 757,394 761,390 769,375 773,370 777,370 789,371 797,369 805,367 809,369 817,373 822,372 829,375 841,374 853,375 861,371 865,367 877,363 881,359 889,355 893,347 897,338 905,325 913,321 921,318 929,313 933,310 937,303 941,298 949,292 957,292 965,289 977,287 981,285 985,287 993,291 1001,294 1005,296 1009,301 1017,311 1025,317 1033,323 1037,330 1045,335 1049,344 1053,345 1057,351',
  '#00ff7f': '13,584 25,606 33,598 37,596 41,588 53,580 65,567 73,564 77,567 85,574 97,573 105,570 111,562 117,545 121,536 125,519 131,510 137,505 141,512 149,524 161,533 165,533 169,530 175,524 181,519 186,517 190,505 193,493 198,480 201,468 205,460 210,440 214,426 217,409 222,380 228,345 233,322 241,305 246,304 253,293 259,291 265,297 270,293 278,285 281,290 285,276 291,258 297,243 305,227 313,208 320,197 325,193 329,196 333,208 337,219 341,235 345,247 351,262 357,279 365,294 373,309 377,320 381,329 389,340 397,353 401,358 405,364 412,378 418,380 425,385 433,385 437,394 441,409 447,424 453,435 457,432 461,433 465,438 473,447 477,457 481,459 485,465 489,471 497,481 501,487 509,490 517,488 521,488 529,492 533,486 541,487 545,489 549,492 557,499 565,497 573,495 577,482 581,455 585,432 589,412 593,402 597,391 601,384 609,375 613,371 621,359 625,348 629,338 637,336 641,333 645,328 649,322 653,332 661,346 665,351 669,352 673,356 677,353 681,351 685,349 689,350 693,346 701,347 709,343 713,347 717,354 721,364 725,376 729,389 733,399 737,407 741,413 745,417 749,420 753,411 757,402 761,390 765,378 769,368 773,358 777,360 781,361 785,366 789,369 793,367 797,364 801,362 805,363 809,367 813,371 817,373 821,373 825,375 829,379 833,375 841,374 849,374 853,376 857,375 861,369 865,361 869,360 873,359 877,357 881,350 889,346 893,335 897,318 901,307 905,301 921,300 925,301 929,300 933,295 937,285 941,278 949,272 953,278 965,277 973,279 977,280 981,277 985,282 993,294 1001,297 1005,301 1009,307 1013,316 1017,323 1021,331 1025,333 1033,336 1037,347 1041,351 1045,354 1049,363 1053,366 1057,371'
};
document.getElementById('averages').innerHTML = Object.entries(averages)
  .map(([colour, points]) => `<polyline points="${points}" stroke="${colour}"/>`).join('');
</script>
</body>
</html>
